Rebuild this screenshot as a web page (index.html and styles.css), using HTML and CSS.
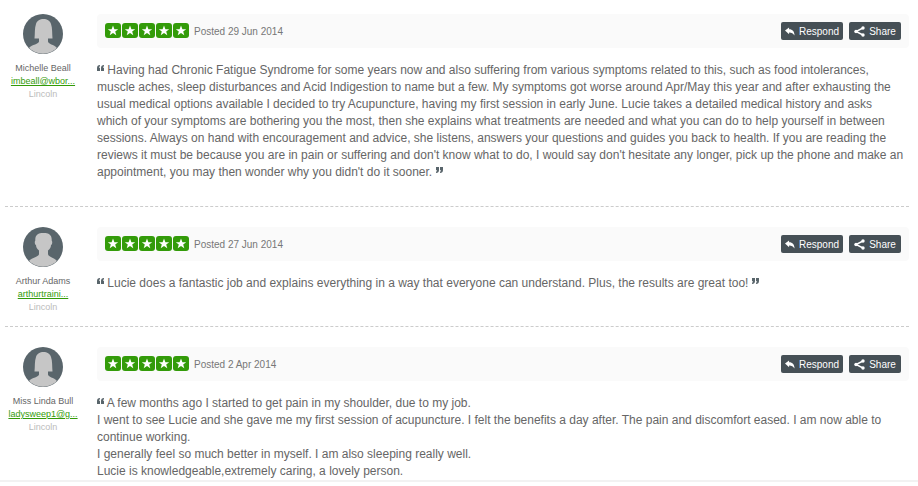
FILE: index.html
```
<!DOCTYPE html>
<html lang="en">
<head>
	<meta charset="utf-8">
	<meta name="viewport" content="width=device-width, initial-scale=1">
	<title>Reviews</title>
	<link rel="stylesheet" href="styles.css">
</head>
<body>

	<!-- shared icons -->
	<svg class="icons">
		<symbol id="female" viewBox="0 0 40 40">
			<circle cx="20" cy="20" r="20" fill="#59656b"/>
			<path d="M6 34C9 30.500 16 30 16 27.500V24.500H11.500C12 20 11.500 14 13 10C14 6.500 17 5 20.500 5S27 6.500 28 10C29.500 14 29 20 29.500 24.500H25V27.500C25 30 31 30.500 34 34A20 20 0 0 1 6 34Z" fill="#c6c6c6"/>
		</symbol>
		<symbol id="male" viewBox="0 0 40 40">
			<circle cx="20" cy="20" r="20" fill="#59656b"/>
			<path d="M6 34C9 30.500 16 30 16 27V23.500C14 22 13 20 13 18C11.500 17.500 11.500 14.500 12.300 13.500C12 8 15 6 20.500 6S29 8 28.700 13.500C29.500 14.500 29.500 17.500 28 18C28 20 27 22 25 23.500V27C25 30 31 30.500 34 34A20 20 0 0 1 6 34Z" fill="#c6c6c6"/>
		</symbol>
		<symbol id="star" viewBox="0 0 16 16">
			<rect width="16" height="15" rx="3" fill="#339b09"/>
			<path d="M8 2.500L9.400 6.200L13.200 6.300L10.200 8.600L11.300 12.300L8 10.100L4.700 12.300L5.800 8.600L2.800 6.300L6.600 6.200Z" fill="#fff"/>
		</symbol>
		<symbol id="reply" viewBox="0 0 11 9">
			<path d="M0 3.500L4.500 0V2C8.500 2 10.500 4.500 10.500 9C9 6.300 7.500 5.500 4.500 5.500V7.500Z" fill="#fff"/>
		</symbol>
		<symbol id="share" viewBox="0 0 11 11">
			<path d="M9 2L2 5.500L9 9" fill="none" stroke="#fff" stroke-width="1.400"/>
			<circle cx="9" cy="2" r="1.700" fill="#fff"/>
			<circle cx="2" cy="5.500" r="1.700" fill="#fff"/>
			<circle cx="9" cy="9" r="1.700" fill="#fff"/>
		</symbol>
		<symbol id="open" viewBox="0 0 7 8">
			<path d="M3 0V1.200Q2 1.400 2 2.700H3V6H0V3Q0 .2 3 0ZM7 0V1.200Q6 1.400 6 2.700H7V6H4V3Q4 .2 7 0Z" fill="#59656b"/>
		</symbol>
		<symbol id="close" viewBox="0 0 7 8">
			<path d="M0 6V4.800Q1 4.600 1 3.300H0V0H3V3Q3 5.800 0 6ZM4 6V4.800Q5 4.600 5 3.300H4V0H7V3Q7 5.800 4 6Z" fill="#59656b"/>
		</symbol>
	</svg>

	<main class="reviews">
		<article class="review">
			<div class="person">
				<svg class="avatar"><use href="#female"/></svg>
				<div class="name">Michelle Beall</div>
				<a class="email" href="#">imbeall@wbor...</a>
				<div class="city">Lincoln</div>
			</div>
			<div class="content">
				<div class="bar">
					<div class="stars" role="img" aria-label="5 stars">
						<svg><use href="#star"/></svg>
						<svg><use href="#star"/></svg>
						<svg><use href="#star"/></svg>
						<svg><use href="#star"/></svg>
						<svg><use href="#star"/></svg>
					</div>
					<span class="posted">Posted 29 Jun 2014</span>
					<button class="btn respond"><svg class="reply"><use href="#reply"/></svg>Respond</button>
					<button class="btn share"><svg><use href="#share"/></svg>Share</button>
				</div>
				<p class="text"><svg class="quote"><use href="#open"/></svg> Having had Chronic Fatigue Syndrome for some years now and also suffering from various symptoms related to this, such as food intolerances, muscle aches, sleep disturbances and Acid Indigestion to name but a few. My symptoms got worse around Apr/May this year and after exhausting the usual medical options available I decided to try Acupuncture, having my first session in early June. Lucie takes a detailed medical history and asks which of your symptoms are bothering you the most, then she explains what treatments are needed and what you can do to help yourself in between sessions. Always on hand with encouragement and advice, she listens, answers your questions and guides you back to health. If you are reading the reviews it must be because you are in pain or suffering and don't know what to do, I would say don't hesitate any longer, pick up the phone and make an appointment, you may then wonder why you didn't do it sooner. <svg class="quote"><use href="#close"/></svg></p>
			</div>
		</article>

		<article class="review">
			<div class="person">
				<svg class="avatar"><use href="#male"/></svg>
				<div class="name">Arthur Adams</div>
				<a class="email" href="#">arthurtraini...</a>
				<div class="city">Lincoln</div>
			</div>
			<div class="content">
				<div class="bar">
					<div class="stars" role="img" aria-label="5 stars">
						<svg><use href="#star"/></svg>
						<svg><use href="#star"/></svg>
						<svg><use href="#star"/></svg>
						<svg><use href="#star"/></svg>
						<svg><use href="#star"/></svg>
					</div>
					<span class="posted">Posted 27 Jun 2014</span>
					<button class="btn respond"><svg class="reply"><use href="#reply"/></svg>Respond</button>
					<button class="btn share"><svg><use href="#share"/></svg>Share</button>
				</div>
				<p class="text"><svg class="quote"><use href="#open"/></svg> Lucie does a fantastic job and explains everything in a way that everyone can understand. Plus, the results are great too! <svg class="quote"><use href="#close"/></svg></p>
			</div>
		</article>

		<article class="review">
			<div class="person">
				<svg class="avatar"><use href="#female"/></svg>
				<div class="name">Miss Linda Bull</div>
				<a class="email" href="#">ladysweep1@g...</a>
				<div class="city">Lincoln</div>
			</div>
			<div class="content">
				<div class="bar">
					<div class="stars" role="img" aria-label="5 stars">
						<svg><use href="#star"/></svg>
						<svg><use href="#star"/></svg>
						<svg><use href="#star"/></svg>
						<svg><use href="#star"/></svg>
						<svg><use href="#star"/></svg>
					</div>
					<span class="posted">Posted 2 Apr 2014</span>
					<button class="btn respond"><svg class="reply"><use href="#reply"/></svg>Respond</button>
					<button class="btn share"><svg><use href="#share"/></svg>Share</button>
				</div>
				<p class="text"><svg class="quote"><use href="#open"/></svg> A few months ago I started to get pain in my shoulder, due to my job.<br>
				I went to see Lucie and she gave me my first session of acupuncture. I felt the benefits a day after. The pain and discomfort eased. I am now able to continue working.<br>
				I generally feel so much better in myself. I am also sleeping really well.<br>
				Lucie is knowledgeable,extremely caring, a lovely person.</p>
			</div>
		</article>
	</main>

</body>
</html>
```

FILE: styles.css
```
body{
	margin: 0;
	background: #fff;
	font-family: "Liberation Sans", Arial, sans-serif;
	color: #666;
}
.icons{
	position: absolute;
	width: 0;
	height: 0;
}
.reviews{
	padding: 14px 9px 0 5px;
	border-bottom: 2px solid #f2f2f2;
}
.review{
	display: flex;
	gap: 16px;
	padding-bottom: 12px;
	margin-bottom: 20px;
	border-bottom: 1px dashed #ccc;
}
.review:last-child{
	padding-bottom: 0;
	margin-bottom: 0;
	border-bottom: none;
}
.person{
	flex: none;
	width: 76px;
	text-align: center;
	font-size: 9px;
	line-height: 13px;
}
.avatar{
	display: block;
	width: 40px;
	height: 40px;
	margin: 0 auto 8px;
}
.email{
	display: block;
	color: #339b09;
}
.city{
	color: #bbb;
}
.content{
	flex: 1;
}
.bar{
	display: flex;
	align-items: center;
	height: 34px;
	padding: 0 8px;
	background: #fafafa;
	border-radius: 4px;
}
.stars{
	display: flex;
	gap: 1px;
}
.stars svg{
	width: 16px;
	height: 16px;
}
.posted{
	margin-left: 5px;
	font-size: 10px;
	color: #777;
}
.btn{
	display: flex;
	align-items: center;
	justify-content: center;
	gap: 4px;
	height: 18px;
	padding: 0 4px;
	border: none;
	border-radius: 2px;
	background: #465056;
	color: #fff;
	font-family: inherit;
	font-size: 10px;
}
.btn svg{
	width: 11px;
	height: 11px;
}
.btn .reply{
	height: 9px;
}
.respond{
	width: 62px;
	margin-left: auto;
}
.share{
	width: 52px;
	margin-left: 6px;
}
.text{
	margin: 0;
	padding: 14px 4px 13px 0;
	font-size: 12px;
	line-height: 17px;
}
.review:last-child .text{
	padding-bottom: 0;
}
.quote{
	width: 7px;
	height: 8px;
	vertical-align: 1px;
}
```
